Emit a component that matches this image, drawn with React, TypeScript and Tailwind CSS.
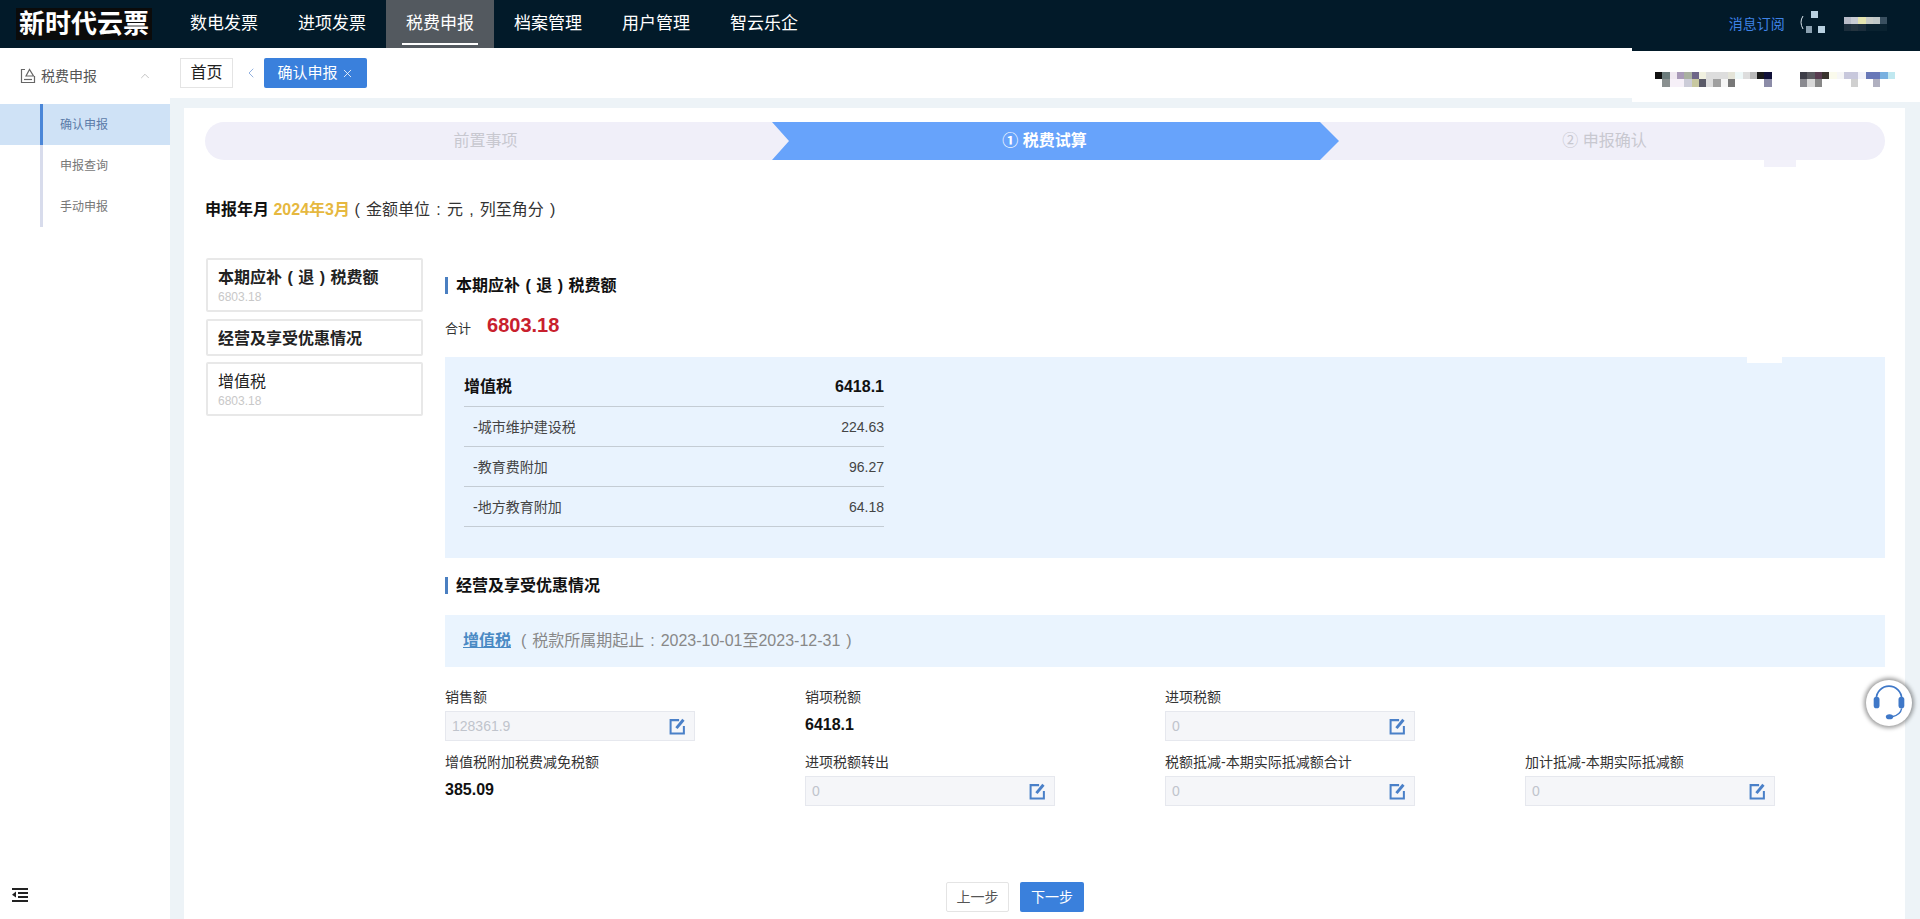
import { ChevronLeft, ChevronUp, X } from "lucide-react";

const font = "[font-family:'Liberation_Sans','Noto_Sans_CJK_SC',sans-serif]";

const navItems = ["数电发票", "进项发票", "税费申报", "档案管理", "用户管理", "智云乐企"];
const sideItems = ["确认申报", "申报查询", "手动申报"];
const taxRows = [
  ["-城市维护建设税", "224.63"],
  ["-教育费附加", "96.27"],
  ["-地方教育附加", "64.18"],
];

// blurred-out account names in the screenshot
const nameA = [
  ["#111111", "#6b7b7b", "#efe8f0", "#a99ab8", "#a9b0a0", "#6e6688", "#f0f0e0", "#dddddd", "#dddddd", "#dddddd", "#e4e4d8", "#eef8f8", "#dddddd", "#b8b8b8", "#1a1a1a", "#101038"],
  ["#ffffff", "#8a9090", "#f6f0f8", "#f6f0f8", "#ccccd8", "#c8c8a0", "#5a5a68", "#dddddd", "#a0a0a0", "#f6f6f6", "#787878", "#ffffff", "#ffffff", "#ffffff", "#ffffff", "#8c8ca8"],
];
const nameB = [
  ["#3e3e48", "#5a5a60", "#583c50", "#3a342e", "#fafaec", "#f6f6f6", "#c8c8dc", "#c8c8dc", "#f2f2fa", "#6878b8", "#6878b8", "#78b0e0", "#c0e8f0"],
  ["#8a8a90", "#d8d8d8", "#888888", "#ffffff", "#ffffff", "#ffffff", "#ffffff", "#d0d0d0", "#ffffff", "#ffffff", "#b0b0c0", "#ffffff", "#ffffff"],
];
const nameTop = [
  ["#b8bcc8", "#c8ccd4", "#e4e4b0", "#c8ccc8", "#c0c8c8", "#3a5060"],
  ["#1c2e3c", "#24343f", "#1c2e3c", "#0a2230", "#0a2230", "#0a2230"],
];

function Mosaic({ rows, size = 7.3 }: { rows: string[][]; size?: number }) {
  const w = rows[0].length * size;
  const h = rows.length * size;
  return (
    <svg width={w} height={h} viewBox={`0 0 ${w} ${h}`} shapeRendering="crispEdges" className="block">
      {rows.map((row, y) =>
        row.map((c, x) => <rect key={`${x}-${y}`} x={x * size} y={y * size} width={size} height={size} fill={c} />),
      )}
    </svg>
  );
}

function EditIcon() {
  return (
    <svg width="17" height="17" viewBox="0 0 16 16" fill="none">
      <path d="M9.5 2H1.5v12.5H14V7.5" stroke="#4a80c8" strokeWidth="1.9" />
      <path d="M7 9.5 13.6 1.6" stroke="#4a80c8" strokeWidth="2.8" />
    </svg>
  );
}

function Heading({ children }: { children: string }) {
  return (
    <div className="flex h-[17px] items-center border-l-[3px] border-[#4a7fc1] pl-[8px]">
      <span className="text-[16px] font-bold text-[#111] [word-spacing:1px]">{children}</span>
    </div>
  );
}

function SideCard({ title, sub, bold, className }: { title: string; sub?: string; bold?: boolean; className?: string }) {
  return (
    <div className={`flex flex-col justify-center rounded-[2px] border-2 border-[#e8e8e8] pl-[10px] pt-[3px] ${sub ? "h-[54px]" : "h-[37px]"} ${className ?? ""}`}>
      <div className={`text-[16px] leading-[20px] text-[#222] [word-spacing:1px] ${bold ? "font-bold" : ""}`}>{title}</div>
      {sub && <div className="text-[12px] leading-[18px] text-[#c8c8c8]">{sub}</div>}
    </div>
  );
}

function Field({ label, value, plain }: { label: string; value: string; plain?: boolean }) {
  return (
    <div>
      <div className="h-[20px] text-[14px] leading-[20px] text-[#333]">{label}</div>
      {plain ? (
        <div className="mt-[4px] flex h-[29px] items-center pb-[2px] text-[16px] font-bold text-[#111]">{value}</div>
      ) : (
        <div className="mt-[4px] flex h-[30px] w-[250px] items-center justify-between border border-[#e6e8ee] bg-[#f5f6f9] pl-[6px] pr-[8px]">
          <span className="text-[14px] text-[#c0c4cc]">{value}</span>
          <EditIcon />
        </div>
      )}
    </div>
  );
}

export default function App() {
  return (
    <div className={`relative flex h-[919px] flex-col overflow-hidden bg-white ${font}`}>
      <header className="flex h-[48px] shrink-0 items-center bg-[#021a29]">
        <div className="ml-[16px] flex h-[32px] w-[136px] items-center justify-center bg-[#0b0b0b] text-[26px] font-bold text-white">新时代云票</div>
        <nav className="ml-[18px] flex h-full">
          {navItems.map((n) => (
            <div key={n} className={`relative flex h-full w-[108px] items-center justify-center text-[17px] text-white ${n === "税费申报" ? "bg-[#53595f]" : ""}`}>
              {n}
              {n === "税费申报" && <div className="absolute bottom-[3px] left-[16px] h-[2px] w-[76px] bg-white" />}
            </div>
          ))}
        </nav>
        <div className="ml-auto flex items-center">
          <span className="mr-[13px] text-[14px] text-[#3f83e6]">消息订阅</span>
          <svg width="36" height="28" viewBox="0 0 36 28" shapeRendering="crispEdges" className="mr-[10px]">
            <path d="M5 6Q1 12 5 19" fill="none" stroke="#d8e4ec" strokeWidth="1" shapeRendering="auto" />
            <rect x="13" y="1" width="7" height="7" fill="#b8d0e0" />
            <rect x="8" y="16" width="6" height="7" fill="#8aa0b0" />
            <rect x="20" y="16" width="7" height="7" fill="#b8d0e0" />
          </svg>
          <div className="mr-[33px]">
            <Mosaic rows={nameTop} size={7.2} />
          </div>
        </div>
      </header>

      <div className="flex min-h-0 flex-1">
        <aside className="flex w-[170px] shrink-0 flex-col bg-white">
          <div className="flex h-[56px] shrink-0 items-center pl-[20px] text-[14px] text-[#555]">
            <svg width="16" height="16" viewBox="0 0 16 16" fill="none" stroke="#666" strokeWidth="1.2">
              <path d="M5 1.5H1.5v13h13V8" />
              <path d="M4 11.5h8" />
              <path d="M6 8 9.5 1.5 13.5 8Z" />
            </svg>
            <span className="ml-[5px]">税费申报</span>
            <ChevronUp size={14} strokeWidth={1} className="ml-[41px] text-[#999]" />
          </div>
          <div className="ml-[40px] w-[3px] bg-[#d8dcec]">
            {sideItems.map((s, i) => (
              <div key={s} className={`relative h-[41px] ${i === 0 ? "bg-[#4a86d8]" : ""}`}>
                {i === 0 && <div className="absolute -left-[40px] top-0 h-full w-[40px] bg-[#cfe2f6]" />}
                {i === 0 && <div className="absolute left-[3px] top-0 h-full w-[127px] bg-[#cfe2f6]" />}
                <span className={`absolute left-[20px] top-1/2 w-[60px] -translate-y-1/2 text-[12px] ${i === 0 ? "text-[#5c7ba8]" : "text-[#777]"}`}>{s}</span>
              </div>
            ))}
          </div>
          <svg width="16" height="14" viewBox="0 0 16 14" fill="#222" className="mb-[17px] ml-[12px] mt-auto" shapeRendering="crispEdges">
            <rect x="0" y="0" width="16" height="1.5" />
            <rect x="6" y="4" width="10" height="1.5" />
            <rect x="6" y="8" width="10" height="1.5" />
            <rect x="0" y="12" width="16" height="1.5" />
            <path d="M4 3.5v6L0 6.7Z" shapeRendering="auto" />
          </svg>
        </aside>

        <div className="flex min-w-0 flex-1 flex-col">
          <div className="flex h-[50px] shrink-0 items-center pl-[10px]">
            <div className="flex h-[30px] w-[53px] items-center justify-center border border-[#e4e4e4] text-[16px] text-[#222]">首页</div>
            <ChevronLeft size={16} strokeWidth={1} className="ml-[10px] text-[#5a8ad0]" />
            <div className="ml-[5px] flex h-[30px] w-[103px] items-center justify-center gap-[3px] rounded-[2px] bg-[#3a80dc] text-[15px] text-white">
              确认申报
              <X size={13} strokeWidth={1.5} />
            </div>
          </div>

          <div className="flex min-h-0 flex-1 bg-[#edf3f7] pl-[14px] pr-[16px] pt-[10px]">
            <main className="flex-1 bg-white pl-[21px] pr-[20px] pt-[14px]">
              <div className="flex h-[38px] rounded-full bg-[#f0eff9] text-[16px]">
                <div className="flex w-[567px] items-center justify-center pr-[6px] text-[#c8c8d0]">前置事项</div>
                <div className="z-10 flex w-[567px] items-center justify-center bg-[#67a3fb] pr-[22px] font-bold text-white [clip-path:polygon(0_0,calc(100%-19px)_0,100%_50%,calc(100%-19px)_100%,0_100%,17px_50%)]">① 税费试算</div>
                <div className="-ml-[19px] flex flex-1 items-center justify-center pl-[4px] text-[#c8c8d0]">② 申报确认</div>
              </div>

              <div className="mt-[38px] flex h-[24px] items-center whitespace-pre text-[16px]">
                <span className="font-bold text-[#111]">申报年月 </span>
                <span className="font-bold text-[#e6b83f]">2024年3月 </span>
                <span className="text-[#333] [word-spacing:1.8px]">( 金额单位 : 元 , 列至角分 )</span>
              </div>

              <div className="mt-[36px] flex">
                <div className="ml-[1px] w-[217px] shrink-0">
                  <SideCard title="本期应补 ( 退 ) 税费额" sub="6803.18" bold />
                  <SideCard title="经营及享受优惠情况" bold className="mt-[7px]" />
                  <SideCard title="增值税" sub="6803.18" className="mt-[6px]" />
                </div>

                <div className="ml-[22px] w-[1440px] shrink-0 pt-[19px]">
                  <Heading>本期应补 ( 退 ) 税费额</Heading>
                  <div className="mt-[18px] flex h-[30px] items-center">
                    <span className="mt-[3px] text-[13px] text-[#333]">合计</span>
                    <span className="mb-[4px] ml-[16px] text-[20px] font-bold text-[#c8202d]">6803.18</span>
                  </div>

                  <div className="mt-[15px] h-[201px] bg-[#e9f3fe] pl-[19px] pt-[10px]">
                    <div className="w-[420px]">
                      <div className="flex h-[40px] items-center justify-between border-b border-[#c4ccd4]">
                        <span className="text-[16px] font-bold text-[#111]">增值税</span>
                        <span className="text-[16px] font-bold text-[#111]">6418.1</span>
                      </div>
                      {taxRows.map(([name, val]) => (
                        <div key={name} className="flex h-[40px] items-center justify-between border-b border-[#c4ccd4] pl-[9px] pt-[2px] text-[14px] text-[#444]">
                          <span>{name}</span>
                          <span>{val}</span>
                        </div>
                      ))}
                    </div>
                  </div>

                  <div className="mt-[19px]">
                    <Heading>经营及享受优惠情况</Heading>
                  </div>
                  <div className="mt-[21px] flex h-[52px] items-center whitespace-pre bg-[#eaf4fe] pl-[18px] text-[16px]">
                    <span className="font-bold text-[#4a8ac4] underline">增值税</span>
                    <span className="ml-[10px] text-[#888] [word-spacing:1.5px]">( 税款所属期起止 : 2023-10-01至2023-12-31 )</span>
                  </div>

                  <div className="mt-[20px] grid grid-cols-[360px_360px_360px_360px] gap-y-[11px]">
                    <Field label="销售额" value="128361.9" />
                    <Field label="销项税额" value="6418.1" plain />
                    <Field label="进项税额" value="0" />
                    <div />
                    <Field label="增值税附加税费减免税额" value="385.09" plain />
                    <Field label="进项税额转出" value="0" />
                    <Field label="税额抵减-本期实际抵减额合计" value="0" />
                    <Field label="加计抵减-本期实际抵减额" value="0" />
                  </div>

                  <div className="ml-[501px] mt-[76px] flex gap-[11px] text-[14px]">
                    <div className="flex h-[30px] w-[63px] items-center justify-center rounded-[2px] border border-[#e4e4e4] text-[#555]">上一步</div>
                    <div className="flex h-[30px] w-[64px] items-center justify-center rounded-[2px] bg-[#3a80dc] text-white">下一步</div>
                  </div>
                </div>
              </div>
            </main>
          </div>
        </div>
      </div>

      {/* blurred account strip lying over the page */}
      <div className="absolute left-[1632px] top-[48px] h-[54px] w-[288px] border-t-[3px] border-[#021a29] bg-white">
        <div className="absolute left-[23px] top-[21px]">
          <Mosaic rows={nameA} />
        </div>
        <div className="absolute left-[168px] top-[21px]">
          <Mosaic rows={nameB} />
        </div>
      </div>

      <div className="absolute left-[1764px] top-[160px] h-[7px] w-[32px] bg-[#f2f1fa]" />
      <div className="absolute left-[1747px] top-[357px] h-[6px] w-[35px] bg-white" />

      {/* support bubble */}
      <div className="absolute left-[1866px] top-[680px] flex h-[46px] w-[46px] items-center justify-center rounded-full bg-white shadow-[0_0_4px_2px_rgba(0,0,0,0.4)]">
        <svg width="36" height="38" viewBox="0 0 34 36" fill="none">
          <path d="M5 18V14a12 12 0 0 1 24 0v4" stroke="#3f78c8" strokeWidth="1.6" />
          <rect x="2.5" y="12" width="5.5" height="11" rx="2.7" fill="#3f78c8" />
          <rect x="26" y="12" width="5.5" height="11" rx="2.7" fill="#3f78c8" />
          <path d="M29 23q-1 6-9 8" stroke="#3f78c8" strokeWidth="1.3" />
          <ellipse cx="17.5" cy="31" rx="3.5" ry="2.4" fill="#3f78c8" />
        </svg>
      </div>
    </div>
  );
}
